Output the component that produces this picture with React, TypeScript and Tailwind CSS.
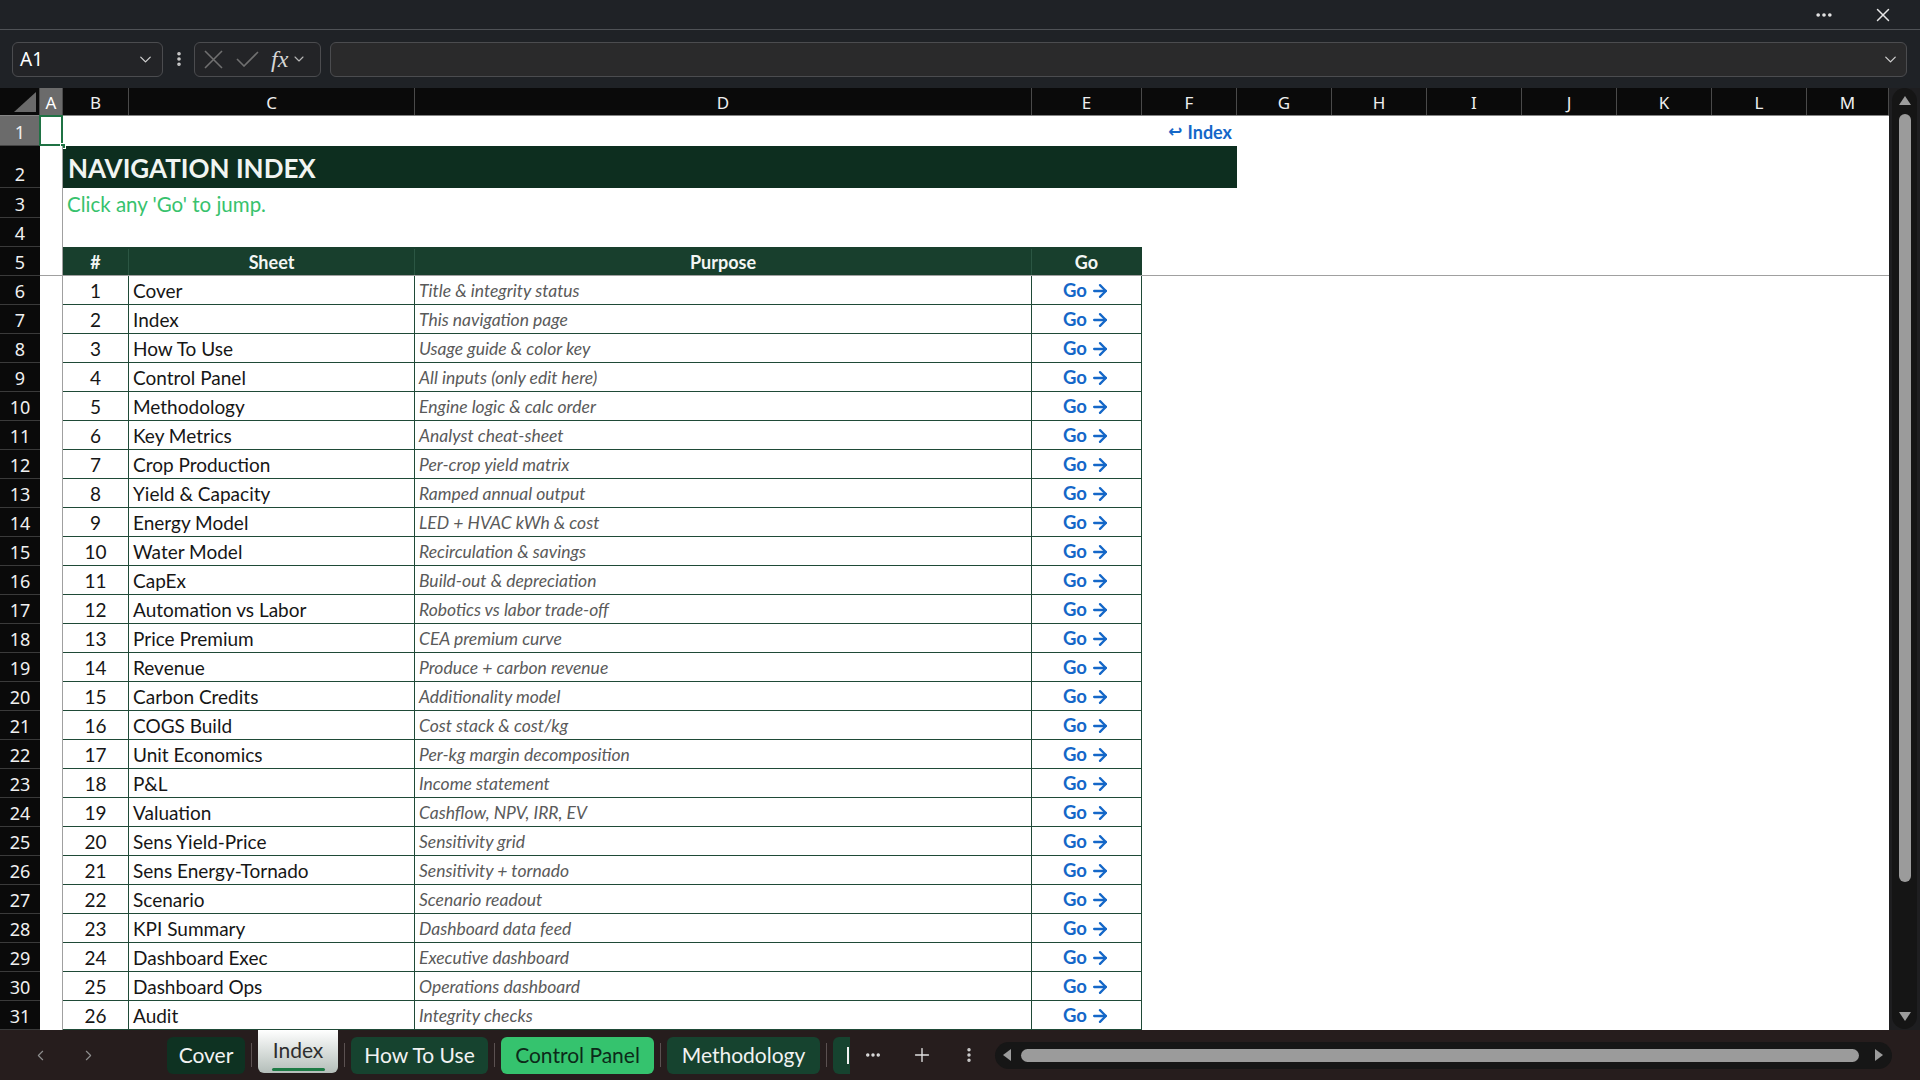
import React from "react";
import {
  ArrowRight,
  ChevronDown,
  ChevronLeft,
  ChevronRight,
  Ellipsis,
  EllipsisVertical,
  Plus,
  X,
} from "lucide-react";

const SHEETS: [string, string][] = [
  ["Cover", "Title & integrity status"],
  ["Index", "This navigation page"],
  ["How To Use", "Usage guide & color key"],
  ["Control Panel", "All inputs (only edit here)"],
  ["Methodology", "Engine logic & calc order"],
  ["Key Metrics", "Analyst cheat-sheet"],
  ["Crop Production", "Per-crop yield matrix"],
  ["Yield & Capacity", "Ramped annual output"],
  ["Energy Model", "LED + HVAC kWh & cost"],
  ["Water Model", "Recirculation & savings"],
  ["CapEx", "Build-out & depreciation"],
  ["Automation vs Labor", "Robotics vs labor trade-off"],
  ["Price Premium", "CEA premium curve"],
  ["Revenue", "Produce + carbon revenue"],
  ["Carbon Credits", "Additionality model"],
  ["COGS Build", "Cost stack & cost/kg"],
  ["Unit Economics", "Per-kg margin decomposition"],
  ["P&L", "Income statement"],
  ["Valuation", "Cashflow, NPV, IRR, EV"],
  ["Sens Yield-Price", "Sensitivity grid"],
  ["Sens Energy-Tornado", "Sensitivity + tornado"],
  ["Scenario", "Scenario readout"],
  ["KPI Summary", "Dashboard data feed"],
  ["Dashboard Exec", "Executive dashboard"],
  ["Dashboard Ops", "Operations dashboard"],
  ["Audit", "Integrity checks"],
];

// column letter + width class (B..M), A is handled separately
const COLUMNS: [string, string][] = [
  ["B", "w-[66px]"],
  ["C", "w-[286px]"],
  ["D", "w-[617px]"],
  ["E", "w-[110px]"],
  ["F", "w-[95px]"],
  ["G", "w-[95px]"],
  ["H", "w-[95px]"],
  ["I", "w-[95px]"],
  ["J", "w-[95px]"],
  ["K", "w-[95px]"],
  ["L", "w-[95px]"],
  ["M", "w-[82px]"],
];

const TopBar: React.FC = () => (
  <div className="flex h-[30px] shrink-0 items-center justify-end border-b border-[#4f5256] bg-[#1f2226] pr-[26px] text-[#e6e6e6]">
    <Ellipsis size={20} strokeWidth={2.4} />
    <X size={22} strokeWidth={1.6} className="ml-[38px]" />
  </div>
);

const FormulaBar: React.FC = () => (
  <div className="flex h-[58px] shrink-0 items-center bg-[#1f2226] pl-[12px] pr-[13px]">
    <div className="flex h-[35px] w-[151px] items-center justify-between rounded-[6px] border border-[#4b4c4f] bg-[#232427] pl-[7px] pr-[7px]">
      <span className="font-['Noto_Sans',sans-serif] text-[19px] text-white">A1</span>
      <ChevronDown size={19} strokeWidth={1.6} className="text-[#d0d0d0]" />
    </div>
    <EllipsisVertical size={18} strokeWidth={2.8} className="ml-[7px] text-[#cfcfcf]" />
    <div className="ml-[6px] flex h-[35px] w-[127px] items-center rounded-[6px] border border-[#4b4c4f] bg-[#232427] pl-[9px]">
      {/* cancel */}
      <svg width="19" height="19" viewBox="0 0 19 19" className="text-[#707070]">
        <path d="M1 1 L18 18 M18 1 L1 18" stroke="currentColor" strokeWidth="1.6" fill="none" />
      </svg>
      {/* enter */}
      <svg width="23" height="16" viewBox="0 0 23 16" className="ml-[13px] text-[#707070]">
        <path d="M1 8 L8 15 L22 1" stroke="currentColor" strokeWidth="1.6" fill="none" />
      </svg>
      <span className="ml-[12px] font-['Liberation_Serif',serif] text-[24px] italic leading-none text-[#d6d6d6]">
        fx
      </span>
      <ChevronDown size={16} strokeWidth={1.6} className="ml-[3px] text-[#b8b8b8]" />
    </div>
    <div className="ml-[9px] flex h-[35px] flex-1 items-center justify-end rounded-[6px] border border-[#4b4c4f] bg-[#2a2a2b] pr-[6px]">
      <ChevronDown size={19} strokeWidth={1.6} className="text-[#d0d0d0]" />
    </div>
  </div>
);

const ColumnHeaders: React.FC = () => (
  <div className="flex h-[28px] shrink-0 border-b border-[#858585] bg-[#0a0a0a] font-['Noto_Sans',sans-serif] text-[17px] text-[#efefef]">
    <div className="flex w-[40px] shrink-0 items-end justify-end border-r border-[#4a4a4a] pb-[3px] pr-[3px]">
      <svg width="22" height="20" viewBox="0 0 22 20">
        <polygon points="22,0 22,20 0,20" fill="#6a6a6a" />
      </svg>
    </div>
    <div className="flex w-[23px] shrink-0 items-center justify-center border-r border-[#4a4a4a] bg-[#6b6b6b] pt-[2px] text-white">
      A
    </div>
    {COLUMNS.map(([letter, w]) => (
      <div
        key={letter}
        className={`${w} flex shrink-0 items-center justify-center border-r border-[#4a4a4a] pt-[2px]`}
      >
        {letter}
      </div>
    ))}
  </div>
);

const SheetRow: React.FC<{
  n: number;
  h: string;
  active?: boolean;
  freeze?: boolean;
  children?: React.ReactNode;
}> = ({ n, h, active, freeze, children }) => (
  <div className={`flex ${h} shrink-0`}>
    <div
      className={`flex w-[40px] shrink-0 items-end justify-center border-b pb-[3px] font-['Noto_Sans',sans-serif] text-[18px] leading-[20px] text-[#f0f0f0] ${
        active ? "border-[#444] bg-[#6b6b6b]" : "border-[#3a3a3a] bg-[#0a0a0a]"
      }`}
    >
      {n}
    </div>
    <div
      className={`relative w-[23px] shrink-0 border-r border-[#a0a0a0] bg-white ${
        freeze ? "border-b" : ""
      }`}
    >
      {active && (
        <>
          <div className="absolute -left-px -top-px bottom-0 right-[-1px] border-2 border-[#1f7244]" />
          <div className="absolute bottom-[-3px] right-[-4px] h-[6px] w-[6px] border border-white bg-[#1f7244]" />
        </>
      )}
    </div>
    {children}
    <div className={`flex-1 bg-white ${freeze ? "border-b border-[#a0a0a0]" : ""}`} />
  </div>
);

const cell = "flex shrink-0 items-center border-r border-b border-[#1f4a37] bg-white pt-[2px]";

const Sheet: React.FC = () => (
  <div className="flex min-w-0 flex-1 flex-col overflow-hidden bg-white font-['Lato',sans-serif]">
    <ColumnHeaders />
    <SheetRow n={1} h="h-[30px]" active>
      <div className="flex w-[1174px] shrink-0 items-center justify-end bg-white pr-[5px] pt-[2px] text-[18px] font-bold text-[#1467c8]">
        <span className="font-['DejaVu_Sans',sans-serif] text-[17px] font-bold">↩</span>
        <span className="ml-[5px]">Index</span>
      </div>
    </SheetRow>
    <SheetRow n={2} h="h-[42px]">
      <div className="flex w-[1174px] shrink-0 items-center bg-[#0d2e1f] pl-[5px] pt-[2px] text-[26px] font-bold text-[#f1f5f2]">
        NAVIGATION INDEX
      </div>
    </SheetRow>
    <SheetRow n={3} h="h-[30px]">
      <div className="flex w-[1174px] shrink-0 items-center bg-white pl-[4px] pt-[2px] text-[20.5px] text-[#37c26d]">
        Click any &apos;Go&apos; to jump.
      </div>
    </SheetRow>
    <SheetRow n={4} h="h-[29px]" />
    <SheetRow n={5} h="h-[29px]" freeze>
      <div className="flex shrink-0 border-b border-[#a0a0a0] bg-[#183f2d] pt-[2px] text-[18px] font-bold text-[#f3f6f4]">
        <div className="flex w-[66px] items-center justify-center border-r border-[#2b5643]">#</div>
        <div className="flex w-[286px] items-center justify-center border-r border-[#2b5643]">Sheet</div>
        <div className="flex w-[617px] items-center justify-center border-r border-[#2b5643]">Purpose</div>
        <div className="flex w-[110px] items-center justify-center border-r border-[#183f2d]">Go</div>
      </div>
    </SheetRow>
    {SHEETS.map(([name, purpose], i) => (
      <SheetRow key={name} n={i + 6} h="h-[29px]">
        <div className={`${cell} w-[66px] justify-center text-[19px] text-[#161616]`}>{i + 1}</div>
        <div className={`${cell} w-[286px] pl-[4px] text-[19px] text-[#161616]`}>{name}</div>
        <div className={`${cell} w-[617px] pl-[4px] text-[17.5px] italic text-[#5a5a5a]`}>{purpose}</div>
        <div className={`${cell} w-[110px] justify-center text-[18.5px] font-bold text-[#1467c8]`}>
          Go
          <ArrowRight size={20} strokeWidth={2.8} className="ml-[3px]" />
        </div>
      </SheetRow>
    ))}
  </div>
);

const VScroll: React.FC = () => (
  <div className="flex w-[31px] shrink-0 flex-col bg-[#1e1e20] px-[3px] pb-[1px]">
    <div className="flex flex-1 flex-col items-center rounded-full bg-[#151515] pb-[8px] pt-[8px]">
      <svg width="12" height="9" viewBox="0 0 12 9">
        <polygon points="6,0 12,9 0,9" fill="#9c9c9c" />
      </svg>
      <div className="mt-[9px] h-[768px] w-[12px] rounded-full bg-[#9b9b9b]" />
      <div className="flex-1" />
      <svg width="12" height="9" viewBox="0 0 12 9">
        <polygon points="0,0 12,0 6,9" fill="#9c9c9c" />
      </svg>
    </div>
  </div>
);

const Sep: React.FC = () => <div className="mx-[6px] h-[24px] w-px shrink-0 bg-[#5b5151]" />;

const tab = "flex h-[37px] shrink-0 items-center justify-center rounded-[6px] text-[21px]";

const TabBar: React.FC = () => (
  <div className="flex h-[50px] shrink-0 items-center bg-[#261d1d] font-['Lato',sans-serif]">
    <div className="flex w-[167px] shrink-0 items-center pl-[32px] text-[#8e8e8e]">
      <ChevronLeft size={17} strokeWidth={1.6} />
      <ChevronRight size={17} strokeWidth={1.6} className="ml-[31px]" />
    </div>
    <div className={`${tab} w-[78px] bg-[#0e3222] text-[#f2f2f2]`}>Cover</div>
    <Sep />
    <div className="flex h-[43px] w-[80px] shrink-0 flex-col items-center self-start rounded-b-[6px] bg-gradient-to-b from-[#ffffff] to-[#b4beb9]">
      <span className="mt-[4px] text-[21px] text-[#2e2e2e]">Index</span>
      <div className="mt-[2px] h-[3px] w-[53px] rounded-full bg-[#1e7b45]" />
    </div>
    <Sep />
    <div className={`${tab} w-[137px] bg-[#16432f] text-[#f2f2f2]`}>How To Use</div>
    <Sep />
    <div className={`${tab} w-[153px] bg-[#35c36e] text-[#0c2a19]`}>Control Panel</div>
    <Sep />
    <div className={`${tab} w-[153px] bg-[#16432f] text-[#f2f2f2]`}>Methodology</div>
    <Sep />
    <div className="flex h-[37px] w-[17px] shrink-0 items-center rounded-l-[6px] bg-[#16432f] pl-[14px]">
      <div className="h-[17px] w-[2px] bg-[#f2f2f2]" />
    </div>
    <Ellipsis size={18} strokeWidth={2.6} className="ml-[14px] text-[#e0e0e0]" />
    <Plus size={22} strokeWidth={1.5} className="ml-[29px] text-[#e0e0e0]" />
    <EllipsisVertical size={18} strokeWidth={2.6} className="ml-[27px] text-[#d0d0d0]" />
    <div className="ml-[17px] flex h-[27px] w-[897px] shrink-0 items-center rounded-full bg-[#161616] pl-[8px] pr-[9px]">
      <svg width="8" height="12" viewBox="0 0 8 12">
        <polygon points="8,0 8,12 0,6" fill="#9c9c9c" />
      </svg>
      <div className="ml-[10px] h-[13px] flex-1 rounded-full bg-[#9b9b9b]" />
      <svg width="8" height="12" viewBox="0 0 8 12" className="ml-[16px]">
        <polygon points="0,0 8,6 0,12" fill="#9c9c9c" />
      </svg>
    </div>
  </div>
);

const App: React.FC = () => (
  <div className="flex h-[1080px] w-[1920px] flex-col overflow-hidden bg-[#1f2226]">
    <TopBar />
    <FormulaBar />
    <div className="flex min-h-0 flex-1">
      <Sheet />
      <VScroll />
    </div>
    <TabBar />
  </div>
);

export default App;
